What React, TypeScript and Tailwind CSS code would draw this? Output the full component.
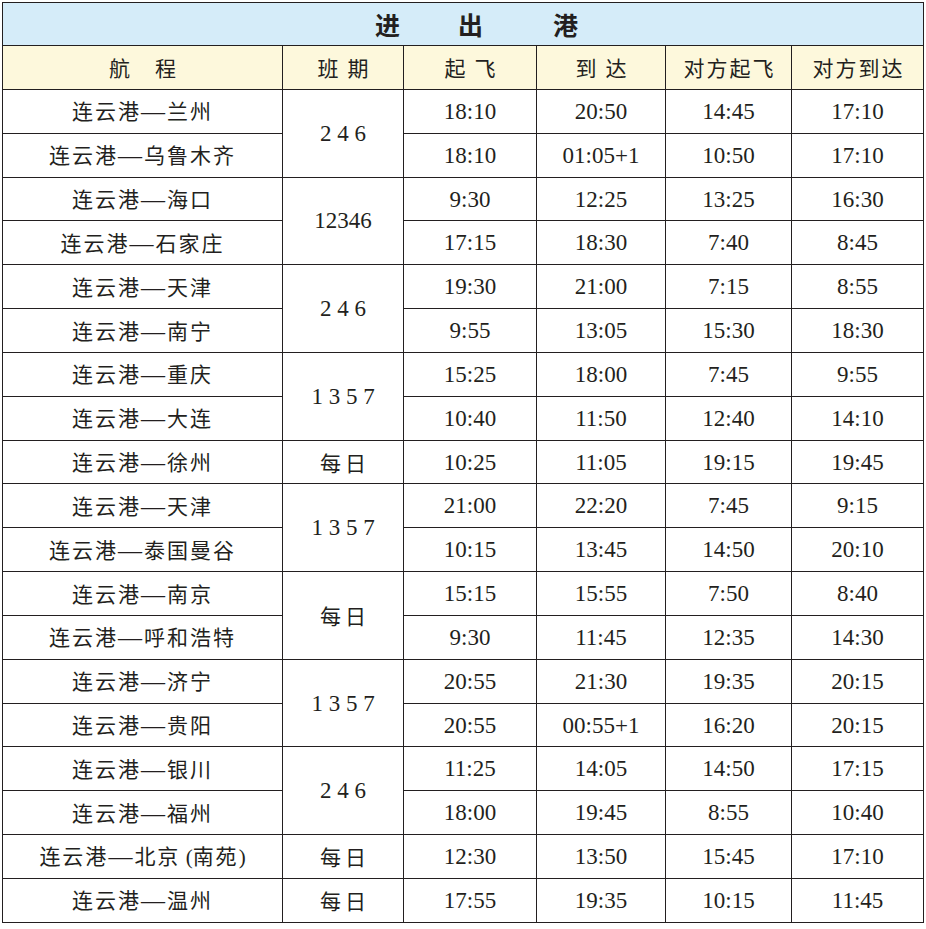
import React from "react";

type Row = { route: string; t: [string, string, string, string]; days?: string; span?: number };

const rows: Row[] = [
  { route: "连云港—兰州", days: "2 4 6", span: 2, t: ["18:10", "20:50", "14:45", "17:10"] },
  { route: "连云港—乌鲁木齐", t: ["18:10", "01:05+1", "10:50", "17:10"] },
  { route: "连云港—海口", days: "12346", span: 2, t: ["9:30", "12:25", "13:25", "16:30"] },
  { route: "连云港—石家庄", t: ["17:15", "18:30", "7:40", "8:45"] },
  { route: "连云港—天津", days: "2 4 6", span: 2, t: ["19:30", "21:00", "7:15", "8:55"] },
  { route: "连云港—南宁", t: ["9:55", "13:05", "15:30", "18:30"] },
  { route: "连云港—重庆", days: "1 3 5 7", span: 2, t: ["15:25", "18:00", "7:45", "9:55"] },
  { route: "连云港—大连", t: ["10:40", "11:50", "12:40", "14:10"] },
  { route: "连云港—徐州", days: "每日", span: 1, t: ["10:25", "11:05", "19:15", "19:45"] },
  { route: "连云港—天津", days: "1 3 5 7", span: 2, t: ["21:00", "22:20", "7:45", "9:15"] },
  { route: "连云港—泰国曼谷", t: ["10:15", "13:45", "14:50", "20:10"] },
  { route: "连云港—南京", days: "每日", span: 2, t: ["15:15", "15:55", "7:50", "8:40"] },
  { route: "连云港—呼和浩特", t: ["9:30", "11:45", "12:35", "14:30"] },
  { route: "连云港—济宁", days: "1 3 5 7", span: 2, t: ["20:55", "21:30", "19:35", "20:15"] },
  { route: "连云港—贵阳", t: ["20:55", "00:55+1", "16:20", "20:15"] },
  { route: "连云港—银川", days: "2 4 6", span: 2, t: ["11:25", "14:05", "14:50", "17:15"] },
  { route: "连云港—福州", t: ["18:00", "19:45", "8:55", "10:40"] },
  { route: "连云港—北京 (南苑)", days: "每日", span: 1, t: ["12:30", "13:50", "15:45", "17:10"] },
  { route: "连云港—温州", days: "每日", span: 1, t: ["17:55", "19:35", "10:15", "11:45"] },
];

const cjk = "font-['Noto_Sans_CJK_SC','Noto_Sans',sans-serif]";
const serif = "font-['Liberation_Serif','Noto_Sans_CJK_SC',serif]";
const cell = "border border-[#231f20] text-center align-middle p-0";

function Route({ text }: { text: string }) {
  const [a, b] = text.split("—");
  const m = b.match(/^(.*) \((.*)\)$/);
  return (
    <span className="whitespace-nowrap">
      {a}
      <span className={`${serif} text-[24px] tracking-[2px]`}>—</span>
      {m ? (
        <>
          {m[1]}
          <span className={`${serif} tracking-normal`}> (</span>
          {m[2]}
          <span className={`${serif} tracking-normal`}>)</span>
        </>
      ) : (
        b
      )}
    </span>
  );
}

export default function App() {
  return (
    <div className="w-[926px] h-[929px] bg-white pl-[2px] pt-[2px]">
      <table className="border-collapse table-fixed text-[#231f20]" style={{ width: 922 }}>
        <colgroup>
          <col className="w-[280px]" />
          <col className="w-[121px]" />
          <col className="w-[133px]" />
          <col className="w-[129px]" />
          <col className="w-[126px]" />
          <col className="w-[132px]" />
        </colgroup>
        <thead>
          <tr className="h-[43px]">
            <th colSpan={6} className={`${cell} bg-[#d5ecf9] ${cjk} text-[25px] font-bold leading-none text-left`}>
              <span className="flex pl-[372px]">
                <span>进</span>
                <span className="ml-[58px]">出</span>
                <span className="ml-[70px]">港</span>
              </span>
            </th>
          </tr>
          <tr className={`h-[44px] bg-[#fdf8dc] ${cjk} text-[21px] font-normal`}>
            <th className={`${cell} font-normal`}>
              <span className="inline-flex gap-[25px]"><span>航</span><span>程</span></span>
            </th>
            <th className={`${cell} font-normal tracking-[9px] pl-[9px]`}>班期</th>
            <th className={`${cell} font-normal tracking-[9px] pl-[9px]`}>起飞</th>
            <th className={`${cell} font-normal tracking-[9px] pl-[9px]`}>到达</th>
            <th className={`${cell} font-normal tracking-[2px] pl-[2px]`}>对方起飞</th>
            <th className={`${cell} font-normal tracking-[2px] pl-[2px]`}>对方到达</th>
          </tr>
        </thead>
        <tbody>
          {rows.map((r, i) => (
            <tr key={i} className="h-[43.84px]">
              <td className={`${cell} ${cjk} text-[21px] tracking-[2px] leading-none`}>
                <Route text={r.route} />
              </td>
              {r.days !== undefined && (
                <td
                  rowSpan={r.span}
                  className={`${cell} ${r.days === "每日" ? `${cjk} text-[21px] tracking-[4px] pl-[4px]` : `${serif} text-[23px]`} leading-none`}
                >
                  {r.days}
                </td>
              )}
              {r.t.map((v, j) => (
                <td key={j} className={`${cell} ${serif} text-[23px] leading-none`}>
                  {v}
                </td>
              ))}
            </tr>
          ))}
        </tbody>
      </table>
    </div>
  );
}
